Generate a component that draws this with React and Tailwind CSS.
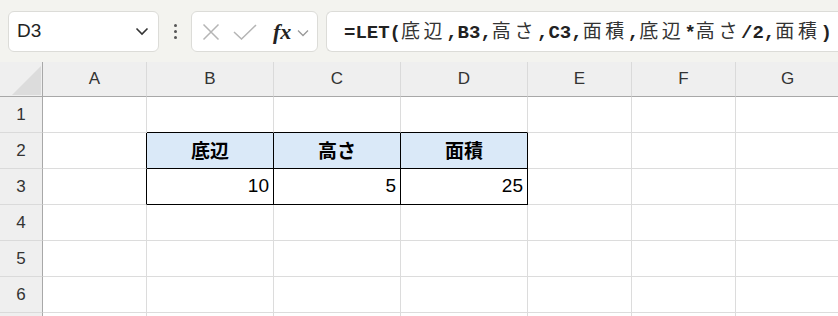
import React from 'react';

const cols = ['A', 'B', 'C', 'D', 'E', 'F', 'G'];
const rows = [1, 2, 3, 4, 5, 6, 7];

// cell contents keyed by address
const cells = {
  B2: { text: '底辺', head: true },
  C2: { text: '高さ', head: true },
  D2: { text: '面積', head: true },
  B3: { text: '10' },
  C3: { text: '5' },
  D3: { text: '25' },
};

const inTable = (c, r) => ['B', 'C', 'D'].includes(c) && (r === 2 || r === 3);

function Formula() {
  const parts = [
    ['=LET(', 0], ['底辺', 1], [',B3,', 0], ['高さ', 1], [',C3,', 0], ['面積', 1],
    [',', 0], ['底辺', 1], ['*', 0], ['高さ', 1], ['/2,', 0], ['面積', 1], [')', 0],
  ];
  return (
    <div className="whitespace-nowrap text-[19px] text-[#1f1f1f]">
      {parts.map(([s, cjk], i) =>
        cjk ? (
          <span key={i} className="font-['Noto_Sans_CJK_JP',sans-serif] font-normal tracking-[3.6px] text-[#333]">{s}</span>
        ) : (
          <span key={i} className="font-['Liberation_Mono','Noto_Sans_CJK_JP',monospace] font-bold text-[#222]">{s}</span>
        )
      )}
    </div>
  );
}

function Toolbar() {
  return (
    <div className="flex h-[62px] items-start bg-[#f3f3ef] pt-[11px] pl-[8px]">
      <div className="flex h-[41px] w-[151px] items-center justify-between rounded-[6px] border border-[#dcdcd8] bg-white pl-[8px] pr-[9px]">
        <span className="font-['Liberation_Sans',sans-serif] text-[19px] text-[#222]">D3</span>
        <svg width="14" height="9" viewBox="0 0 14 9"><path d="M1.5 1.5 L7 7 L12.5 1.5" fill="none" stroke="#333" strokeWidth="1.6" /></svg>
      </div>
      <div className="flex h-[41px] w-[32px] flex-col items-center justify-center gap-[3px]">
        <span className="h-[3px] w-[3px] rounded-full bg-[#555]" />
        <span className="h-[3px] w-[3px] rounded-full bg-[#555]" />
        <span className="h-[3px] w-[3px] rounded-full bg-[#555]" />
      </div>
      <div className="flex h-[41px] w-[127px] items-center rounded-[6px] border border-[#dcdcd8] bg-white pl-[10px]">
        <svg width="18" height="18" viewBox="0 0 18 18"><path d="M1.5 1.5 L16.5 16.5 M16.5 1.5 L1.5 16.5" stroke="#b5b5b5" strokeWidth="1.5" /></svg>
        <svg className="ml-[13px]" width="24" height="16" viewBox="0 0 24 16"><path d="M1 8 L8.5 15 L23 1" fill="none" stroke="#b5b5b5" strokeWidth="1.5" /></svg>
        <span className="ml-[16px] font-['Liberation_Serif',serif] text-[22px] font-bold italic leading-none text-[#222]">fx</span>
        <svg className="ml-[6px] mt-[2px]" width="12" height="8" viewBox="0 0 12 8"><path d="M1 1.5 L6 6.5 L11 1.5" fill="none" stroke="#999" strokeWidth="1.3" /></svg>
      </div>
      <div className="ml-[8px] flex h-[41px] flex-1 items-center rounded-l-[6px] border border-r-0 border-[#dcdcd8] bg-white pl-[17px]">
        <Formula />
      </div>
    </div>
  );
}

export default function App() {
  return (
    <div className="h-[316px] w-[838px] overflow-hidden bg-white">
      <Toolbar />
      <div className="grid grid-cols-[43px_104px_127px_127px_127px_104px_104px_104px_1fr] grid-rows-[35px_repeat(7,36px)]">
        {/* corner */}
        <div className="relative border-r border-b border-[#a8a8a8] bg-[#efefef]">
          <svg className="absolute left-[12px] top-[4px]" width="29" height="29" viewBox="0 0 29 29"><path d="M29 0 L29 29 L0 29 Z" fill="#dcdcdc" /></svg>
        </div>
        {cols.map((c) => (
          <div key={c} className="flex items-center justify-center border-r border-b border-r-[#dadada] border-b-[#a8a8a8] bg-[#efefef] font-['Liberation_Sans',sans-serif] text-[17px] text-[#333]">
            {c}
          </div>
        ))}
        <div className="border-b border-b-[#a8a8a8] bg-[#efefef]" />
        {rows.map((r) => (
          <React.Fragment key={r}>
            {/* row 7 falls below the window edge, so its label stays empty */}
            <div className="flex items-center justify-center border-r border-b border-r-[#a8a8a8] border-b-[#dadada] bg-[#efefef] font-['Liberation_Sans',sans-serif] text-[17px] text-[#333]">
              {r < 7 ? r : ''}
            </div>
            {cols.map((c) => {
              const cell = cells[c + r];
              const t = inTable(c, r);
              const rightBlack = t || (c === 'A' && (r === 2 || r === 3));
              const bottomBlack = t || (r === 1 && ['B', 'C', 'D'].includes(c));
              return (
                <div
                  key={c + r}
                  className={`flex items-center border-r border-b px-[4px] text-[19px] text-black ${
                    rightBlack ? 'border-r-black' : 'border-r-[#dcdcdc]'
                  } ${bottomBlack ? 'border-b-black' : 'border-b-[#dcdcdc]'} ${
                    cell && cell.head
                      ? "justify-center bg-[#dae9f8] font-['Noto_Sans_CJK_JP',sans-serif] font-bold"
                      : "justify-end font-['Liberation_Sans','Noto_Sans_CJK_JP',sans-serif]"
                  }`}
                >
                  {cell ? cell.text : ''}
                </div>
              );
            })}
            <div className="border-b border-b-[#dcdcdc]" />
          </React.Fragment>
        ))}
      </div>
    </div>
  );
}
